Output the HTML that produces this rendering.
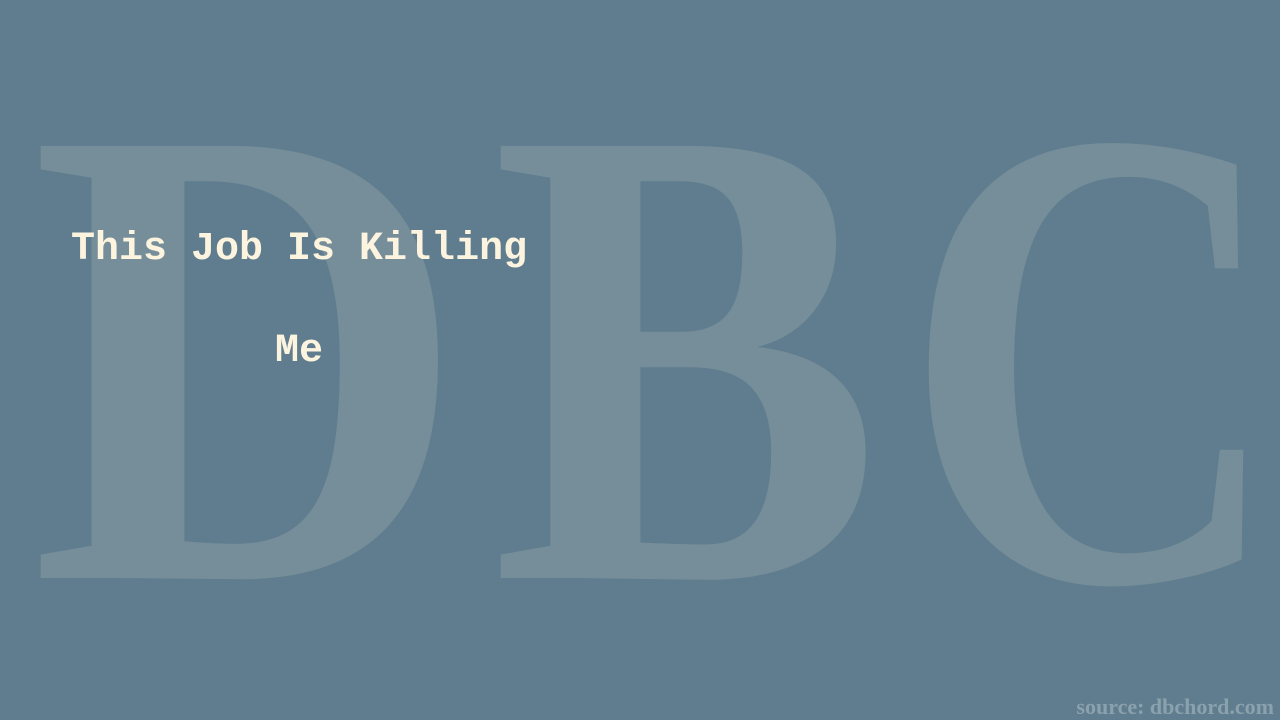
<!DOCTYPE html>
<html><head><meta charset="utf-8"><style>
html,body{margin:0;padding:0;width:1280px;height:720px;overflow:hidden;background:#5f7d8e;}
svg{position:absolute;left:0;top:0;}
.t{position:absolute;left:71px;width:456px;text-align:center;font-family:"Liberation Mono",monospace;font-weight:bold;font-size:40px;color:#fdf4df;line-height:40px;white-space:nowrap;}
.s{position:absolute;right:6px;top:695px;font-family:"Liberation Serif",serif;font-weight:bold;font-size:22px;color:#8ba1ad;line-height:24px;}
</style></head><body>
<svg width="1280" height="720">
<g fill="#768d9a" font-family="Liberation Serif,serif" font-weight="bold" font-size="660">
<text x="0" y="578" transform="translate(30,0) scale(0.918,1)">D</text>
<text x="0" y="578" transform="translate(491,0) scale(0.888,1)">B</text>
<text x="0" y="580" transform="translate(903,0) scale(0.798,1)">C</text>
</g>
</svg>
<div class="t" style="top:230px">This Job Is Killing</div>
<div class="t" style="top:332px">Me</div>
<div class="s">source: dbchord.com</div>
</body></html>
